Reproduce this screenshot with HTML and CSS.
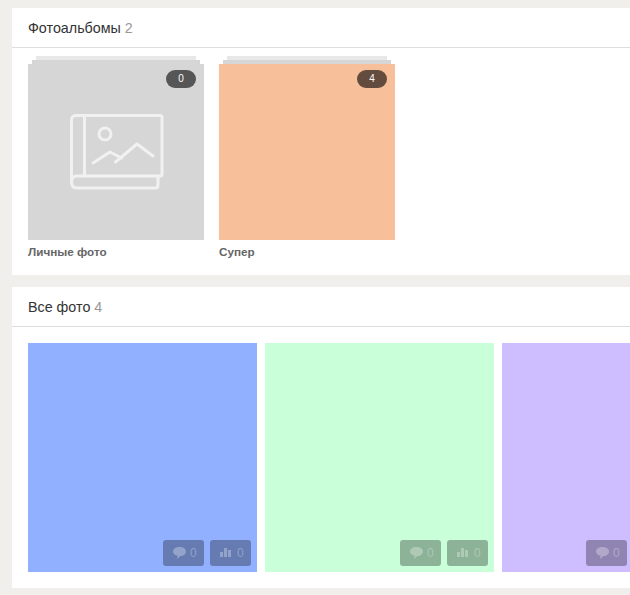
FILE: index.html
```html
<!DOCTYPE html>
<html lang="ru">

<head>
   <meta charset="UTF-8">
   <meta name="viewport" content="width=device-width, initial-scale=1.0">
   <title>Фото</title>
   <link rel="stylesheet" href="styles.css">
</head>

<body>
   <section class="panel">
       <h2 class="panel-title">Фотоальбомы <span class="count">2</span></h2>
       <div class="albums">
           <div class="album">
               <div class="album-stack">
                   <div class="album-cover cover-grey">
                       <span class="badge">0</span>
                       <svg class="album-icon" width="96" height="80" viewBox="0 0 96 80" fill="none" stroke="#f1f1f1" stroke-width="3" stroke-linecap="round" stroke-linejoin="round">
                           <path d="M8 3.500H92q2 0 2 2V62q0 2-2 2H9q-5.500 0-5.500 6T9 76H87q3 0 3-3V65"/>
                           <path d="M3.500 70V8q0-4.500 4.500-4.500"/>
                           <path d="M16.500 3.500V64"/>
                           <circle cx="37" cy="22" r="6"/>
                           <path d="M25 51L42 40l11.500 6"/>
                           <path d="M47.500 50L69 32l16 12"/>
                       </svg>
                   </div>
               </div>
               <div class="album-name">Личные фото</div>
           </div>
           <div class="album">
               <div class="album-stack">
                   <div class="album-cover cover-orange">
                       <span class="badge">4</span>
                   </div>
               </div>
               <div class="album-name">Супер</div>
           </div>
       </div>
   </section>

   <section class="panel">
       <h2 class="panel-title">Все фото <span class="count">4</span></h2>
       <div class="photos">
           <div class="photo photo-blue">
               <div class="photo-actions">
                   <span class="action">
                       <svg width="13" height="12" viewBox="0 0 13 12" fill="currentColor"><path d="M6.500 0C10.500 0 13 2 13 4.500S10.500 9 7.500 9L4 12l.500-3.300C2 8.300 0 6.800 0 4.500 0 2 2.500 0 6.500 0z"/></svg>0
                   </span>
                   <span class="action">
                       <svg width="13" height="10" viewBox="0 0 13 10" fill="currentColor"><path d="M0 4h3v5H0zM4 0h3v9H4zM8 2h3v7H8z"/></svg>0
                   </span>
               </div>
           </div>
           <div class="photo photo-green">
               <div class="photo-actions">
                   <span class="action">
                       <svg width="13" height="12" viewBox="0 0 13 12" fill="currentColor"><path d="M6.500 0C10.500 0 13 2 13 4.500S10.500 9 7.500 9L4 12l.500-3.300C2 8.300 0 6.800 0 4.500 0 2 2.500 0 6.500 0z"/></svg>0
                   </span>
                   <span class="action">
                       <svg width="13" height="10" viewBox="0 0 13 10" fill="currentColor"><path d="M0 4h3v5H0zM4 0h3v9H4zM8 2h3v7H8z"/></svg>0
                   </span>
               </div>
           </div>
           <div class="photo photo-purple">
               <div class="photo-actions">
                   <span class="action">
                       <svg width="13" height="12" viewBox="0 0 13 12" fill="currentColor"><path d="M6.500 0C10.500 0 13 2 13 4.500S10.500 9 7.500 9L4 12l.500-3.300C2 8.300 0 6.800 0 4.500 0 2 2.500 0 6.500 0z"/></svg>0
                   </span>
               </div>
           </div>
       </div>
   </section>
</body>

</html>
```

FILE: styles.css
```css
html,
body {
    overflow: hidden;
}

body {
    margin: 0;
    padding: 8px 0 0 12px;
    height: 595px;
    box-sizing: border-box;
    background-color: #f0efeb;
    font-family: "Liberation Sans", Arial, sans-serif;
}

.panel {
    background-color: #fff;
    margin-bottom: 12px;
}

.panel-title {
    margin: 0;
    height: 39px;
    padding: 0 16px;
    line-height: 40px;
    font-size: 14.3px;
    font-weight: normal;
    color: #333;
    border-bottom: 1px solid #ddd;
}

.count {
    color: #999;
}

/* Albums */
.albums {
    display: flex;
    gap: 15px;
    padding: 8px 16px 16px;
}

.album {
    width: 176px;
}

.album-stack {
    padding-top: 8px;
    position: relative;
}

/* the two sheets peeking out behind the cover */
.album-stack::before,
.album-stack::after {
    content: "";
    position: absolute;
    height: 4px;
}

.album-stack::before {
    top: 0;
    left: 8px;
    right: 8px;
    background-color: #e8e8e8;
}

.album-stack::after {
    top: 4px;
    left: 4px;
    right: 4px;
    background-color: #d6d6d6;
}

.album-cover {
    position: relative;
    height: 176px;
    display: flex;
    align-items: center;
    justify-content: center;
}

.cover-grey {
    background-color: #d6d6d6;
}

.cover-orange {
    background-color: #f7bf9a;
}

.badge {
    position: absolute;
    top: 6px;
    right: 8px;
    width: 30px;
    height: 18px;
    line-height: 18px;
    border-radius: 9px;
    background-color: rgba(0, 0, 0, 0.6);
    color: #fff;
    font-size: 10px;
    text-align: center;
}

.album-name {
    margin-top: 5px;
    line-height: 14px;
    font-size: 11.7px;
    font-weight: bold;
    color: #666;
}

/* Photos */
.photos {
    display: flex;
    gap: 8px;
    padding: 16px;
}

.photo {
    position: relative;
    flex: none;
    width: 229px;
    height: 229px;
}

.photo-blue {
    background-color: #91b0ff;
}

.photo-green {
    background-color: #c9ffd9;
}

.photo-purple {
    width: 131px;
    background-color: #cfbeff;
}

.photo-actions {
    position: absolute;
    right: 6px;
    bottom: 6px;
    display: flex;
    gap: 6px;
}

.action {
    display: flex;
    align-items: center;
    gap: 4px;
    width: 41px;
    height: 26px;
    padding-left: 10px;
    box-sizing: border-box;
    border-radius: 3px;
    background-color: rgba(0, 0, 0, 0.3);
    color: rgba(255, 255, 255, 0.3);
    font-size: 12px;
}
```
